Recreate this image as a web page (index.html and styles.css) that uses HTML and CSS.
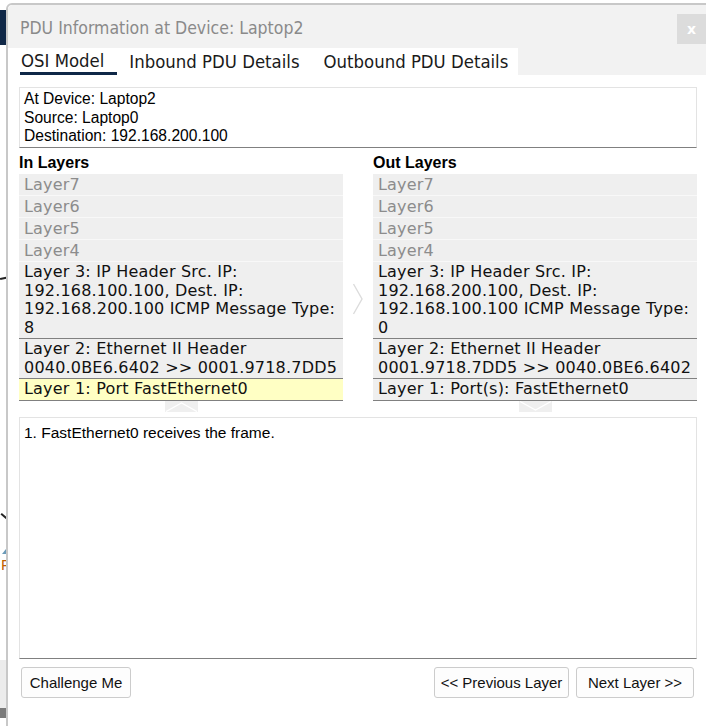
FILE: index.html
```html
<!DOCTYPE html>
<html>
<head>
<meta charset="utf-8">
<link rel="stylesheet" href="styles.css">
</head>
<body>
<div class="desk">
  <div class="bg-bar"></div>
  <div class="bg-line bg-line1"></div>
  <div class="bg-line bg-line2"></div>
  <div class="bg-tri"></div>
  <div class="bg-letter">F</div>
  <div class="bg-gray"></div>
  <div class="bg-dark"></div>

  <div class="dialog">
    <div class="titlebar">
      <div class="title">PDU Information at Device: Laptop2</div>
      <div class="close">x</div>
    </div>
    <div class="tabbar">
      <div class="tabs">
        <div class="tab active">OSI Model</div>
        <div class="tab">Inbound PDU Details</div>
        <div class="tab">Outbound PDU Details</div>
      </div>
    </div>
    <div class="content">
      <div class="info">
        <div>At Device: Laptop2</div>
        <div>Source: Laptop0</div>
        <div>Destination: 192.168.200.100</div>
      </div>
      <div class="columns">
        <div class="col">
          <div class="col-title">In Layers</div>
          <div class="layers">
            <div class="layer dim">Layer7</div>
            <div class="layer dim">Layer6</div>
            <div class="layer dim">Layer5</div>
            <div class="layer dim">Layer4</div>
            <div class="layer main">Layer 3: IP Header Src. IP: 192.168.100.100, Dest. IP: 192.168.200.100 ICMP Message Type: 8</div>
            <div class="layer main">Layer 2: Ethernet II Header 0040.0BE6.6402 &gt;&gt; 0001.9718.7DD5</div>
            <div class="layer main selected">Layer 1: Port FastEthernet0</div>
          </div>
          <div class="caret-row">
            <div class="caret">
              <svg width="33" height="11" viewBox="0 0 33 11"><polyline points="1,10.5 16.5,2 32,10.5" fill="none" stroke="#ffffff" stroke-width="1.3"/></svg>
            </div>
          </div>
        </div>
        <div class="mid">
          <svg width="12" height="32" viewBox="0 0 12 32"><polyline points="1.5,1 10,16 1.5,31" fill="none" stroke="#dcdcdc" stroke-width="1.4"/></svg>
        </div>
        <div class="col">
          <div class="col-title">Out Layers</div>
          <div class="layers">
            <div class="layer dim">Layer7</div>
            <div class="layer dim">Layer6</div>
            <div class="layer dim">Layer5</div>
            <div class="layer dim">Layer4</div>
            <div class="layer main">Layer 3: IP Header Src. IP: 192.168.200.100, Dest. IP: 192.168.100.100 ICMP Message Type: 0</div>
            <div class="layer main">Layer 2: Ethernet II Header 0001.9718.7DD5 &gt;&gt; 0040.0BE6.6402</div>
            <div class="layer main">Layer 1: Port(s): FastEthernet0</div>
          </div>
          <div class="caret-row">
            <div class="caret">
              <svg width="33" height="11" viewBox="0 0 33 11"><polyline points="1,0.5 16.5,9 32,0.5" fill="none" stroke="#ffffff" stroke-width="1.3"/></svg>
            </div>
          </div>
        </div>
      </div>
      <div class="message">1. FastEthernet0 receives the frame.</div>
      <div class="buttons">
        <button class="btn btn-challenge">Challenge Me</button>
        <div class="spacer"></div>
        <button class="btn btn-prev">&lt;&lt; Previous Layer</button>
        <button class="btn btn-next">Next Layer &gt;&gt;</button>
      </div>
    </div>
  </div>
</div>
</body>
</html>
```
FILE: styles.css
```css
html, body {
  margin: 0;
  padding: 0;
  background: #ffffff;
}
.desk {
  position: relative;
  width: 706px;
  height: 726px;
  overflow: hidden;
  background: #ffffff;
}
.bg-bar {
  position: absolute;
  left: 0; top: 10px;
  width: 8px; height: 35px;
  background: #0f2747;
}
.bg-line {
  position: absolute;
  height: 2px;
  width: 10px;
  background: #222;
}
.bg-line1 { left: 0; top: 277px; transform: rotate(-12deg); }
.bg-line2 { left: 0; top: 516px; transform: rotate(40deg); }
.bg-tri {
  position: absolute;
  left: 2px; top: 549px;
  width: 0; height: 0;
  border-left: 4px solid transparent;
  border-right: 4px solid transparent;
  border-bottom: 5px solid #6a9ab8;
}
.bg-letter {
  position: absolute;
  left: 1px; top: 556px;
  font: 15px "Liberation Sans", Arial, sans-serif;
  color: #c06000;
}
.bg-gray {
  position: absolute;
  left: 0; top: 660px;
  width: 8px; height: 48px;
  background: #ececec;
}
.bg-dark {
  position: absolute;
  left: 0; top: 708px;
  width: 8px; height: 10px;
  background: #7a7a7a;
}

.dialog {
  position: absolute;
  left: 6px;
  top: 3px;
  width: 702px;
  height: 740px;
  box-sizing: border-box;
  border: 2px solid #c8c8c8;
  border-radius: 6px 0 0 0;
  background: #ffffff;
  display: flex;
  flex-direction: column;
}
.titlebar {
  height: 43px;
  flex: none;
  background: #f2f2f2;
  display: flex;
  align-items: center;
  padding-left: 12px;
  border-top-left-radius: 5px;
  position: relative;
}
.title {
  font-family: "DejaVu Sans Condensed", "Liberation Sans Narrow", sans-serif;
  font-stretch: condensed;
  font-size: 17.5px;
  color: #8a8a8a;
  margin-top: 2px;
}
.close {
  position: absolute;
  left: 669px;
  top: 9px;
  width: 29px;
  height: 30px;
  background: #dcdcdc;
  color: #ffffff;
  font: bold 14px "DejaVu Sans", sans-serif;
  display: flex;
  align-items: center;
  justify-content: center;
}
.tabbar {
  height: 27px;
  flex: none;
  background: #f2f2f2;
  display: flex;
}
.tabs {
  background: #ffffff;
  width: 510px;
  display: flex;
  padding-left: 12px;
  box-sizing: border-box;
}
.tab {
  font-family: "DejaVu Sans Condensed", "Liberation Sans Narrow", sans-serif;
  font-stretch: condensed;
  font-size: 18.4px;
  color: #1a1a1a;
  line-height: 27px;
  height: 27px;
  box-sizing: border-box;
  padding: 0 12px;
  white-space: nowrap;
}
.tab.active {
  padding-left: 1px;
  padding-right: 13px;
  border-bottom: 3px solid #0f2747;
  line-height: 25px;
}
.content {
  flex: 1;
  padding: 12px 9px 0 11px;
  display: flex;
  flex-direction: column;
}
.info {
  height: 57px;
  border: 1px solid #e3e3e3;
  border-bottom: 1px solid #808080;
  padding: 2px 4px 0 4px;
  font: 15.6px/18.5px "Liberation Sans", Arial, sans-serif;
  color: #000;
}
.columns {
  display: flex;
}
.col {
  width: 324px;
  display: flex;
  flex-direction: column;
}
.col-title {
  font: bold 16px/22px "Liberation Sans", Arial, sans-serif;
  color: #000;
  height: 22px;
  padding-top: 4px;
}
.layers {
  display: flex;
  flex-direction: column;
}
.layer {
  background: #efefef;
  font: 16px/18.5px "DejaVu Sans", Verdana, sans-serif;
  letter-spacing: 0.2px;
  padding: 1px 4px 1px 5px;
  color: #111;
  border-bottom: 1px solid #f8f8f8;
}
.layer.dim {
  color: #8c8c8c;
  height: 19.5px;
  padding-top: 1.5px;
  padding-bottom: 0;
}
.layer.main {
  border-bottom: 1px solid #808080;
}
.layer.selected {
  background: #ffffc4;
}
.caret-row {
  display: flex;
  padding-left: 146px;
}
.caret-row .caret {
  background: #efefef;
  width: 33px;
  height: 11px;
  display: flex;
}
.mid {
  width: 30px;
  display: flex;
  justify-content: center;
  padding-top: 135px;
  box-sizing: border-box;
}
.message {
  margin-top: 5px;
  height: 228px;
  border: 1px solid #e3e3e3;
  border-bottom: 1px solid #808080;
  padding: 6px 4px;
  font: 15.5px/18px "Liberation Sans", Arial, sans-serif;
  color: #000;
}
.buttons {
  display: flex;
  margin-top: 8px;
  padding-left: 2px;
  padding-right: 3px;
  gap: 7px;
}
.spacer { flex: 1; }
.btn {
  height: 31px;
  border: 1px solid #cccccc;
  border-radius: 3px;
  background: #fdfdfd;
  font: 15px "Liberation Sans", Arial, sans-serif;
  color: #111;
  padding: 0;
  text-align: center;
}
.btn-challenge { width: 110px; }
.btn-prev { width: 135px; }
.btn-next { width: 118px; }
```
